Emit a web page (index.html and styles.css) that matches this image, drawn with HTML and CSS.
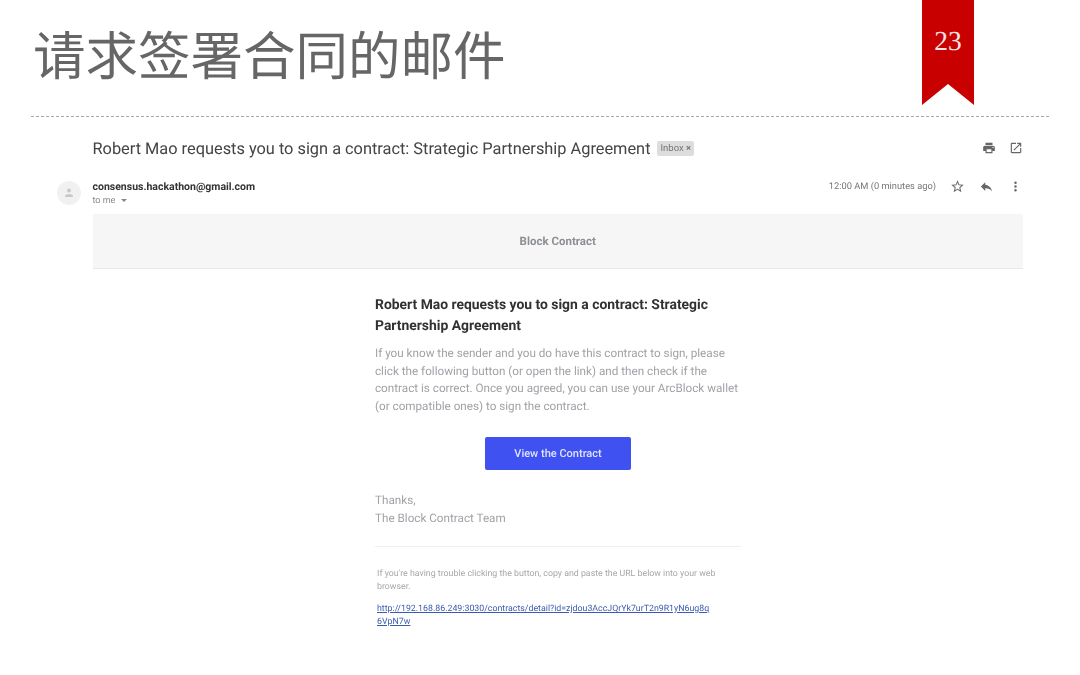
FILE: index.html
```html
<!DOCTYPE html>
<html lang="en">
<head>
  <meta charset="UTF-8">
  <meta name="viewport" content="width=device-width, initial-scale=1.0">
  <title>请求签署合同的邮件</title>
  <link rel="stylesheet" href="styles.css">
</head>
<body>
  <div class="slide">
    <header class="slide-head">
      <h1>请求签署合同的邮件</h1>
      <div class="ribbon">23</div>
    </header>

    <div class="mail">
      <div class="subject-row">
        <h2>Robert Mao requests you to sign a contract: Strategic Partnership Agreement</h2>
        <span class="label">Inbox <b>×</b></span>
        <div class="subject-icons">
          <svg width="14" height="14" viewBox="0 0 24 24"><path fill="#666" d="M19 8H5c-1.66 0-3 1.34-3 3v6h4v4h12v-4h4v-6c0-1.66-1.34-3-3-3zm-3 11H8v-5h8v5zm3-7c-.55 0-1-.45-1-1s.45-1 1-1 1 .45 1 1-.45 1-1 1zm-1-9H6v4h12V3z"/></svg>
          <svg width="14" height="14" viewBox="0 0 24 24"><path fill="#666" d="M19 19H5V5h7V3H5c-1.11 0-2 .9-2 2v14c0 1.1.89 2 2 2h14c1.1 0 2-.9 2-2v-7h-2v7zM14 3v2h3.59l-9.83 9.83 1.41 1.41L19 6.41V10h2V3h-7z"/></svg>
        </div>
      </div>

      <div class="sender-row">
        <div class="avatar">
          <svg width="12" height="12" viewBox="0 0 24 24"><path fill="#c8c8c8" d="M12 11a4 4 0 1 0 0-8 4 4 0 0 0 0 8zm0 3c-3 0-8 1.5-8 4v2h16v-2c0-2.500-5-4-8-4z"/></svg>
        </div>
        <div class="sender-info">
          <div class="sender">consensus.hackathon@gmail.com</div>
          <div class="to-me">to me <i class="caret"></i></div>
        </div>
        <div class="sender-tools">
          <span class="time">12:00 AM (0 minutes ago)</span>
          <svg width="15" height="15" viewBox="0 0 24 24"><path fill="#666" d="M22 9.24l-7.190-.62L12 2 9.190 8.630 2 9.240l5.460 4.730L5.820 21 12 17.270 18.180 21l-1.630-7.030L22 9.240zM12 15.400l-3.760 2.270 1-4.280-3.320-2.880 4.380-.38L12 6.100l1.710 4.040 4.380.38-3.320 2.880 1 4.280L12 15.400z"/></svg>
          <svg width="15" height="15" viewBox="0 0 24 24"><path fill="#666" d="M10 9V5l-7 7 7 7v-4.100c5 0 8.500 1.600 11 5.100-1-5-4-10-11-11z"/></svg>
          <svg width="15" height="15" viewBox="0 0 24 24"><path fill="#666" d="M12 8a2 2 0 1 0 0-4 2 2 0 0 0 0 4zm0 2a2 2 0 1 0 0 4 2 2 0 0 0 0-4zm0 6a2 2 0 1 0 0 4 2 2 0 0 0 0-4z"/></svg>
        </div>
      </div>

      <div class="brand-bar">Block Contract</div>

      <div class="mail-body">
        <h3>Robert Mao requests you to sign a contract: Strategic Partnership Agreement</h3>
        <p class="intro">If you know the sender and you do have this contract to sign, please click the following button (or open the link) and then check if the contract is correct. Once you agreed, you can use your ArcBlock wallet (or compatible ones) to sign the contract.</p>
        <div class="button-wrap"><a class="view-btn">View the Contract</a></div>
        <p class="thanks">Thanks,<br>The Block Contract Team</p>
        <div class="trouble">
          <p>If you're having trouble clicking the button, copy and paste the URL below into your web browser.</p>
          <a class="url">http://192.168.86.249:3030/contracts/detail?id=zjdou3AccJQrYk7urT2n9R1yN6ug8q6VpN7w</a>
        </div>
      </div>
    </div>
  </div>
</body>
</html>
```

FILE: styles.css
```css
body {
  margin: 0;
  background: white;
  font-family: Roboto, "Liberation Sans", "Noto Sans CJK SC", sans-serif;
  text-rendering: geometricPrecision;
}

.slide {
  width: 1080px;
  height: 675px;
  overflow: hidden;
}

.slide-head {
  height: 116px;
  margin: 0 31px;
  border-bottom: 1px dashed #aaa;
  display: flex;
  justify-content: space-between;
  align-items: flex-start;
}

.slide-head h1 {
  margin: 21px 0 0 2px;
  font-family: "Noto Sans CJK SC", sans-serif;
  font-size: 52.500px;
  line-height: 64px;
  font-weight: 400;
  color: #666;
}

.ribbon {
  width: 52px;
  height: 105px;
  margin-right: 75px;
  padding-top: 25px;
  box-sizing: border-box;
  background: #c80000;
  clip-path: polygon(0 0, 100% 0, 100% 100%, 50% 80%, 0 100%);
  color: #f6e4e4;
  font-family: "Liberation Serif", serif;
  font-size: 27.500px;
  line-height: 32px;
  text-align: center;
}

.mail {
  padding: 0 57px;
  filter: blur(0.35px);
}

.subject-row {
  display: flex;
  align-items: center;
  height: 30px;
  margin-top: 16px;
  padding-left: 35.500px;
}

.subject-row h2 {
  margin: 0;
  font-size: 16.350px;
  font-weight: 400;
  color: #444;
  white-space: nowrap;
}

.label {
  margin-left: 7px;
  padding: 2px 3px;
  background: #ddd;
  border-radius: 2px;
  font-size: 9.500px;
  color: #777;
}

.subject-icons {
  margin-left: auto;
  display: flex;
  gap: 13px;
}

.sender-row {
  display: flex;
  align-items: flex-start;
  height: 45px;
  margin-top: 6px;
}

.avatar {
  width: 24px;
  height: 24px;
  margin: 12px 12px 0 0;
  border-radius: 50%;
  background: #f1f1f1;
  display: flex;
  align-items: center;
  justify-content: center;
}

.sender-info {
  padding-top: 11px;
  margin-left: -0.500px;
}

.sender {
  font-size: 10.500px;
  font-weight: 700;
  color: #333;
}

.to-me {
  font-size: 9px;
  color: #888;
  margin-top: 3px;
}

.caret {
  display: inline-block;
  margin-left: 3px;
  vertical-align: middle;
  border: 3px solid transparent;
  border-top-color: #888;
  border-bottom: 0;
}

.sender-tools {
  margin-left: auto;
  margin-top: 10px;
  display: flex;
  align-items: center;
  gap: 14px;
}

.time {
  font-size: 9.300px;
  color: #777;
}

.brand-bar {
  margin-left: 35.500px;
  height: 54px;
  background: #f6f6f7;
  border-bottom: 1px solid #e8e8e8;
  display: flex;
  align-items: center;
  justify-content: center;
  font-size: 11.500px;
  font-weight: 700;
  color: #8c8f94;
}

.mail-body {
  width: 366px;
  margin: 26px 0 0 318px;
}

.mail-body h3 {
  margin: 0;
  font-size: 13.900px;
  line-height: 20.500px;
  font-weight: 700;
  color: #2f3133;
}

.intro {
  margin: 9px 0 0;
  font-size: 11.700px;
  line-height: 17.500px;
  color: #a0a2a7;
}

.button-wrap {
  margin-top: 22px;
  text-align: center;
}

.view-btn {
  display: inline-block;
  width: 146px;
  height: 33px;
  line-height: 33px;
  background: #3f51f0;
  border-radius: 2px;
  color: #dfe3ff;
  font-size: 11px;
  font-weight: 500;
}

.thanks {
  margin: 22px 0 0;
  font-size: 11.700px;
  line-height: 17.500px;
  color: #a0a2a7;
}

.trouble {
  margin-top: 19px;
  padding: 21px 2px 0;
  border-top: 1px solid #eeeeee;
}

.trouble p {
  margin: 0;
  max-width: 345px;
  font-size: 8.800px;
  line-height: 13px;
  color: #a5a7ac;
}

.url {
  display: block;
  width: 334px;
  margin-top: 9px;
  font-size: 8.800px;
  line-height: 13px;
  color: #3a5bb0;
  text-decoration: underline;
  word-break: break-all;
}
```
